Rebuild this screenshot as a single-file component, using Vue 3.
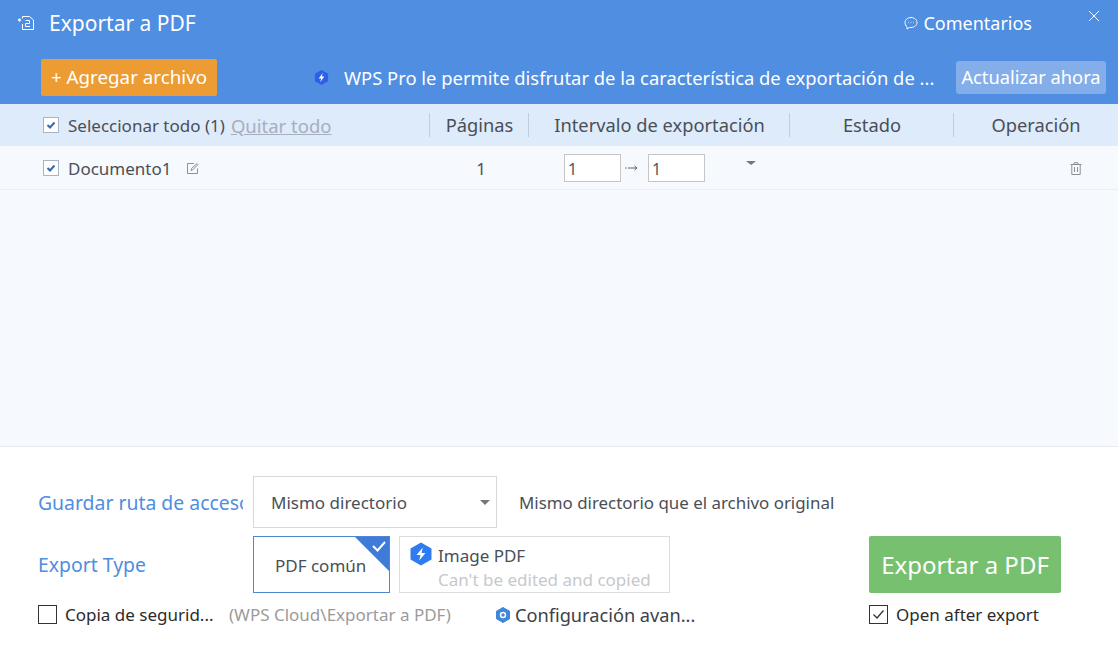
<script setup>
const columns = ['Páginas', 'Intervalo de exportación', 'Estado', 'Operación']
</script>

<template>
  <div class="dialog">
    <header class="head">
      <div class="title-row">
        <svg class="title-icon" viewBox="0 0 18 16" width="18" height="16" fill="none" stroke="#fff" stroke-width="1">
          <path d="M5.5 3.5V1.5H12.5L16.5 5V14.5H5.5V9" />
          <path d="M8.5 5.5H12.5V8.5H8.5V11.5H13" />
          <path d="M1 5H4M2.5 3.5V6.5" stroke-width="1.6" />
        </svg>
        <span class="title">Exportar a PDF</span>
        <span class="feedback">
          <svg viewBox="0 0 14 14" width="14" height="14" fill="none" stroke="#fff" stroke-width="1">
            <path d="M7 1.5C10.3 1.5 13 3.7 13 6.5S10.3 11.5 7 11.5H5.5L3 13V10.8C1.800 9.900 1 8.300 1 6.500 1 3.700 3.700 1.500 7 1.500Z" />
            <path d="M4.500 6.500H5M6.800 6.500H7.300M9 6.500H9.500" stroke-width="1.300" />
          </svg>
          Comentarios
        </span>
        <svg class="close" viewBox="0 0 12 12" width="12" height="12" stroke="#fff" stroke-width="1" fill="none">
          <path d="M1 1L11 11M11 1L1 11" />
        </svg>
      </div>
      <div class="tool-row">
        <button class="add-btn">+ Agregar archivo</button>
        <svg class="pro-icon" viewBox="0 0 16 18" width="15" height="17">
          <path d="M8 1L15 5V13L8 17L1 13V5Z" fill="#2f5fe8" />
          <path d="M9.500 4L5 10H7.800L6.500 14L11 8H8.200Z" fill="#fff" />
        </svg>
        <span class="promo">WPS Pro le permite disfrutar de la característica de exportación de ...</span>
        <button class="upgrade">Actualizar ahora</button>
      </div>
    </header>

    <div class="grid table-head">
      <div class="first">
        <span class="tick">
          <svg viewBox="0 0 12 12" width="12" height="12" fill="none" stroke="#3a68b0" stroke-width="2"><path d="M2.500 6L5 8.500 9.500 3.500" /></svg>
        </span>
        <span>Seleccionar todo (1)</span>
        <a class="clear-all">Quitar todo</a>
      </div>
      <div v-for="col in columns" :key="col" class="col-title">{{ col }}</div>
    </div>

    <div class="list">
      <div class="grid row">
        <div class="first">
          <span class="tick">
            <svg viewBox="0 0 12 12" width="12" height="12" fill="none" stroke="#3a68b0" stroke-width="2"><path d="M2.500 6L5 8.500 9.500 3.500" /></svg>
          </span>
          <span>Documento1</span>
          <svg class="edit" viewBox="0 0 13 13" width="13" height="13" fill="none" stroke="#8a8f98" stroke-width="1">
            <path d="M11.500 6.500V11.500H1.500V1.500H8" />
            <path d="M5 8.500L5.500 6.500 11 1.500 12 2.500 6.500 8Z" />
          </svg>
        </div>
        <div class="pages">1</div>
        <div class="range">
          <span class="num">1</span>
          <svg class="arrow" viewBox="0 0 14 8" width="14" height="8" fill="none" stroke="#666" stroke-width="1"><path d="M0 4H1.500M3 4H12M9.500 2L12 4 9.500 6" /></svg>
          <span class="num">1</span>
          <i class="caret small"></i>
        </div>
        <div></div>
        <div class="op">
          <svg viewBox="0 0 12 13" width="12" height="13" fill="none" stroke="#8a8f98" stroke-width="1">
            <path d="M0.500 2.500H11.500M4 2.500V0.800H8V2.500M1.800 2.500V12.500H10.200V2.500M4.500 5V10M7.500 5V10" />
          </svg>
        </div>
      </div>
    </div>

    <footer class="foot">
      <div class="foot-row path-row">
        <div class="label">Guardar ruta de acceso</div>
        <div class="select">
          <span>Mismo directorio</span>
          <i class="caret"></i>
        </div>
        <span class="path-hint">Mismo directorio que el archivo original</span>
      </div>

      <div class="foot-row type-row">
        <div class="label">Export Type</div>
        <div class="type-card active">
          PDF común
          <svg class="corner" viewBox="0 0 34 34" width="34" height="34">
            <path d="M0 0H34V34Z" fill="#3f7bd9" />
            <path d="M18 9L22.500 13.500 30 5" fill="none" stroke="#fff" stroke-width="2" />
          </svg>
        </div>
        <div class="type-card image">
          <svg class="hex" viewBox="0 0 22 24" width="22" height="24">
            <path d="M11 0.500L21.500 6.500V17.500L11 23.500 0.500 17.500V6.500Z" fill="#2f7cf0" />
            <path d="M12.800 5.500L6.500 13H10.500L9.200 18.500 15.500 11H11.500Z" fill="#fff" />
          </svg>
          <div>
            <div class="image-name">Image PDF</div>
            <div class="image-note">Can't be edited and copied</div>
          </div>
        </div>
        <button class="export-btn">Exportar a PDF</button>
      </div>

      <div class="foot-row opts-row">
        <span class="box"></span>
        <span class="opt backup">Copia de segurid...</span>
        <span class="cloud">(WPS Cloud\Exportar a PDF)</span>
        <svg class="gear" viewBox="0 0 16 16" width="16" height="16">
          <path d="M8 0.500L14.500 4.200V11.800L8 15.500 1.500 11.800V4.200Z" fill="#3f86dc" stroke="#3f86dc" stroke-linejoin="round" />
          <circle cx="8" cy="8" r="3.200" fill="#fff" />
          <circle cx="8" cy="8" r="1.700" fill="#3f86dc" />
        </svg>
        <span class="opt advanced">Configuración avan...</span>
        <span class="box checked">
          <svg viewBox="0 0 17 17" width="17" height="17" fill="none" stroke="#333" stroke-width="1.300"><path d="M3.500 8.500L7 12 13.500 4.500" /></svg>
        </span>
        <span class="opt">Open after export</span>
      </div>
    </footer>
  </div>
</template>

<style scoped>
.dialog {
  width: 1118px;
  height: 664px;
  display: flex;
  flex-direction: column;
  background: #fff;
  color: #4a4f57;
  font-family: "Noto Sans", "Open Sans", sans-serif;
  overflow: hidden;
}

.head {
  height: 104px;
  background: #4f8ee0;
  color: #fff;
}

.title-row {
  height: 45px;
  display: flex;
  align-items: center;
  padding-left: 17px;
}

.title-icon {
  margin-right: 14px;
}

.title {
  font-size: 21px;
}

.feedback {
  margin-left: auto;
  display: flex;
  align-items: center;
  gap: 5px;
  font-size: 18px;
}

.close {
  margin: -13px 18px 0 56px;
}

.tool-row {
  height: 37px;
  margin-top: 14px;
  display: flex;
  align-items: center;
  padding-left: 41px;
}

.add-btn {
  width: 176px;
  height: 37px;
  border: 0;
  border-radius: 2px;
  background: #ed9b33;
  color: #fff;
  font: inherit;
  font-size: 18.8px;
  padding: 0 0 2px;
}

.pro-icon {
  margin-left: 97px;
}

.promo {
  margin-left: 15px;
  font-size: 18.4px;
  line-height: 34px;
  white-space: nowrap;
}

.upgrade {
  margin-left: auto;
  margin-right: 12px;
  width: 150px;
  height: 33px;
  border: 0;
  border-radius: 3px;
  background: #84aeea;
  color: #fff;
  font: inherit;
  font-size: 18.3px;
  padding: 0 0 2px;
}

.grid {
  display: grid;
  grid-template-columns: 430px 99px 261px 164px 164px;
  align-items: center;
}

.table-head {
  height: 42px;
  background: #deebfb;
  font-size: 18.3px;
}

.first {
  display: flex;
  align-items: center;
  padding-left: 43px;
  font-size: 17px;
}

.tick {
  width: 14px;
  height: 14px;
  border: 1px solid #aab4c2;
  background: #fff;
  margin-right: 9px;
  display: flex;
  align-items: center;
  justify-content: center;
}

.clear-all {
  margin-left: 6px;
  font-size: 18.5px;
  color: #a6afbb;
  text-decoration: underline;
}

.col-title {
  height: 24px;
  line-height: 24px;
  text-align: center;
  border-left: 1px solid #c3ccd8;
  margin-left: -1px;
}

.list {
  flex: 1;
  background: #f6f9fe;
  border-bottom: 1px solid #e8eaed;
}

.row {
  height: 44px;
  box-sizing: border-box;
  border-bottom: 1px solid #eceef1;
  font-size: 17px;
  padding-top: 1px;
}

.edit {
  margin-left: 14px;
}

.pages {
  text-align: center;
  padding-left: 3px;
}

.range {
  display: flex;
  align-items: center;
  padding-left: 35px;
  position: relative;
}

.arrow {
  margin: 0 7px 0 2px;
  flex: 0 0 18px;
}

.num {
  width: 57px;
  height: 28px;
  line-height: 28px;
  box-sizing: border-box;
  border: 1px solid #c6c6c6;
  background: #fff;
  padding-left: 3px;
  font-size: 16px;
  color: #555;
}

.caret {
  width: 0;
  height: 0;
  border-left: 5px solid transparent;
  border-right: 5px solid transparent;
  border-top: 6px solid #777;
}

.caret.small {
  border-top-width: 4px;
  margin: -10px 0 0 41px;
}

.op {
  text-align: right;
  padding-right: 36px;
  line-height: 0;
}

.foot {
  height: 217px;
  padding: 29px 0 0 38px;
  box-sizing: border-box;
}

.foot-row {
  display: flex;
  align-items: center;
}

.label {
  width: 205px;
  margin-right: 10px;
  color: #4f8ee0;
  font-size: 19.4px;
  white-space: nowrap;
  overflow: hidden;
  flex-shrink: 0;
}

.select {
  width: 244px;
  height: 52px;
  box-sizing: border-box;
  border: 1px solid #d8d8d8;
  display: flex;
  align-items: center;
  justify-content: space-between;
  padding: 0 6px 0 17px;
  font-size: 17px;
}

.select .caret {
  border-top-width: 5px;
}

.path-hint {
  margin-left: 22px;
  font-size: 16.9px;
}

.type-row {
  margin-top: 8px;
}

.type-card {
  height: 57px;
  box-sizing: border-box;
  border: 1px solid #dcdcdc;
}

.type-card.active {
  width: 137px;
  border-color: #4f86cf;
  font-size: 17px;
  line-height: 58px;
  padding-left: 21px;
  position: relative;
  white-space: nowrap;
}

.corner {
  position: absolute;
  top: 0;
  right: 0;
}

.type-card.image {
  width: 271px;
  margin-left: 9px;
  display: flex;
  padding: 5px 0 0 10px;
  gap: 6px;
  font-size: 17px;
  line-height: 24px;
}

.hex {
  flex-shrink: 0;
}

.image-name {
  line-height: 28px;
}

.image-note {
  color: #c6c9cd;
  line-height: 20px;
}

.export-btn {
  width: 192px;
  height: 57px;
  margin-left: 199px;
  border: 0;
  border-radius: 2px;
  background: #76c070;
  color: #fff;
  font: inherit;
  font-size: 24px;
  padding: 0;
}

.opts-row {
  margin-top: 11px;
  height: 21px;
  font-size: 17px;
}

.box {
  width: 19px;
  height: 19px;
  box-sizing: border-box;
  border: 1px solid #333;
  flex-shrink: 0;
  line-height: 0;
}

.opt {
  color: #2b2b2b;
  margin-left: 8px;
  white-space: nowrap;
}

.backup {
  width: 156px;
  flex-shrink: 0;
}

.cloud {
  color: #9b9b9b;
  white-space: nowrap;
  width: 266px;
  margin-left: 8px;
  flex-shrink: 0;
}

.advanced {
  margin-left: 4px;
  width: 354px;
  font-size: 18.2px;
  color: #3d4148;
  flex-shrink: 0;
}

.gear {
  flex-shrink: 0;
}
</style>

<style>
html,
body {
  margin: 0;
  background: #fff;
}
</style>
